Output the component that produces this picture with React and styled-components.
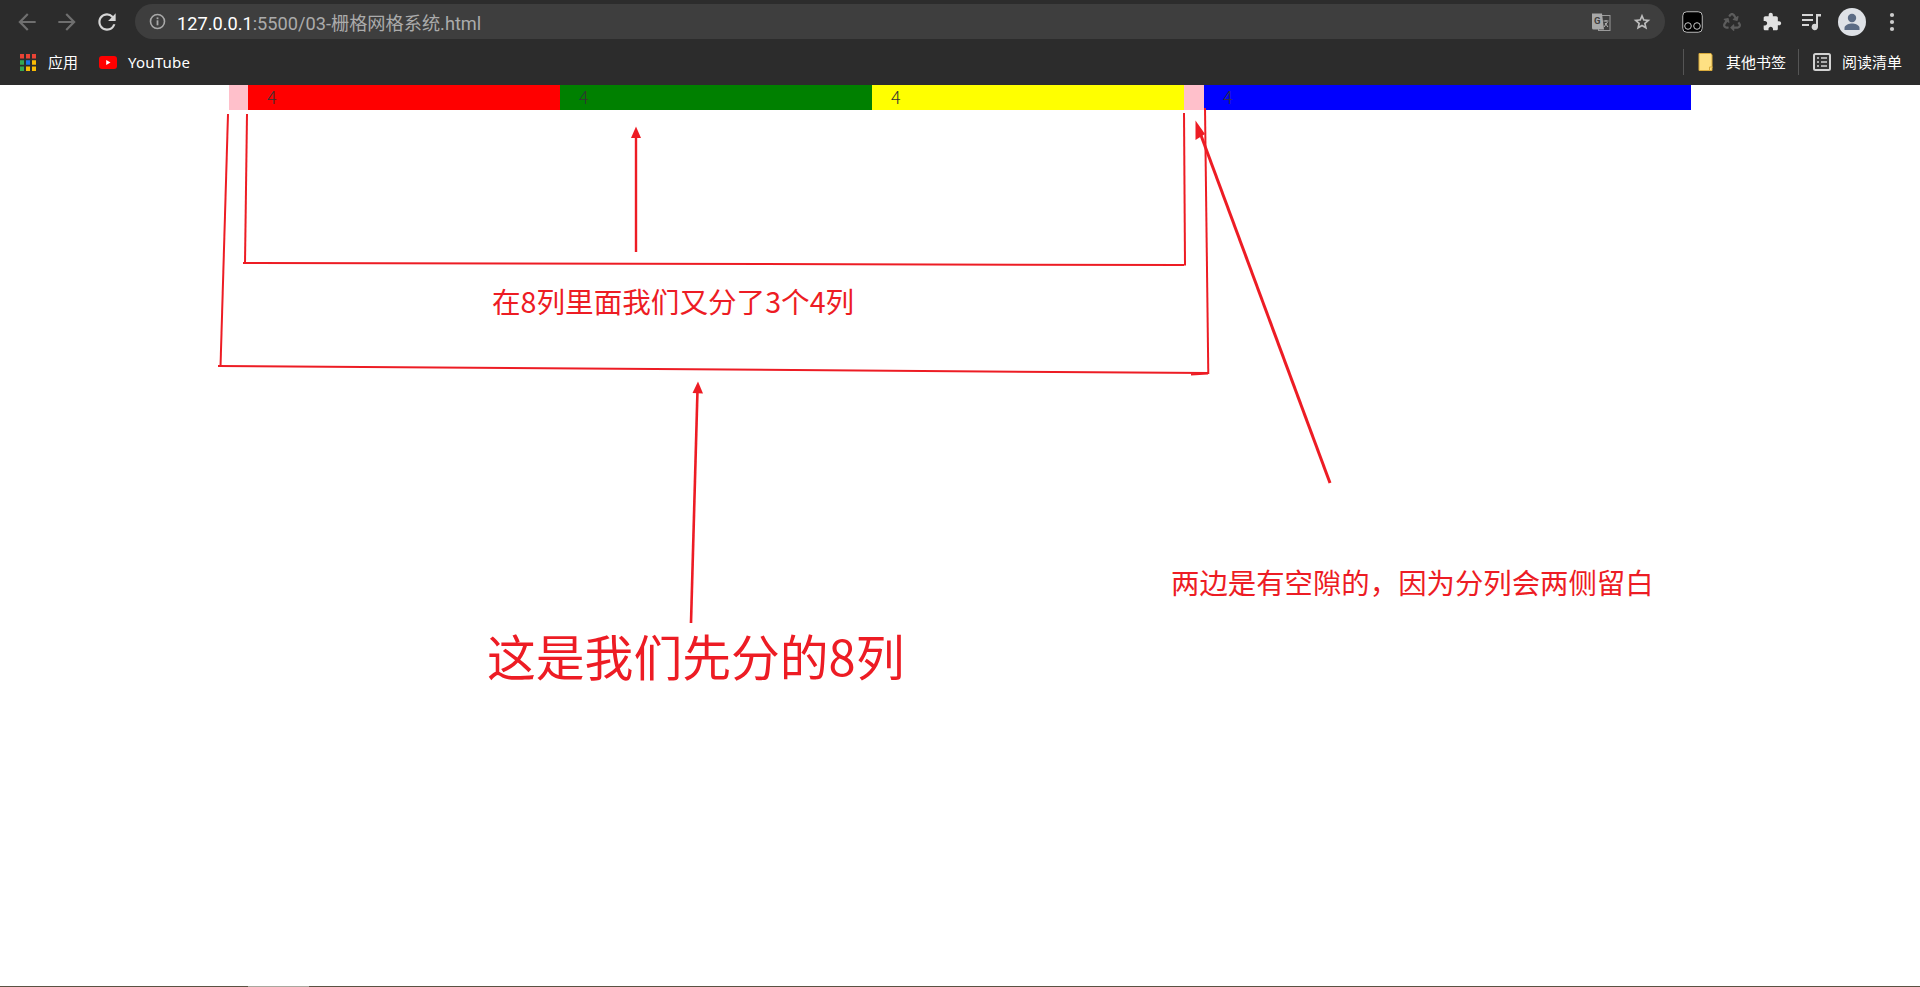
import React from 'react';
import styled, { createGlobalStyle } from 'styled-components';
import { FaRecycle } from 'react-icons/fa';

const Global = createGlobalStyle`
  html, body { margin: 0; padding: 0; background: #fff; overflow: hidden; }
  body { font-family: "Noto Sans CJK SC", "Noto Sans", sans-serif; }
`;
const Page = styled.div`
  position: relative; width: 1920px; height: 987px; display: flex; flex-direction: column; background: #fff; overflow: hidden;
`;
const BrowserChrome = styled.header`
  flex: none; height: 85px; background: #2c2c2c; display: flex; flex-direction: column;
`;
const Toolbar = styled.div`
  height: 46px; display: flex; align-items: flex-start; padding: 4px 0 0 14px; box-sizing: border-box;
`;
const NavButton = styled.div`
  width: 26px; height: 35px; margin-right: ${p => p.$gap}px; display: flex; align-items: center; justify-content: center; flex: none;
  svg { width: 26px; height: 26px; fill: ${p => p.$color}; }
`;
const Omnibox = styled.div`
  flex: none; width: 1530px; height: 35px; margin: 0 7px 0 15px; border-radius: 18px; background: #3e3e3e;
  display: flex; align-items: center; padding: 0 13px 0 14px; box-sizing: border-box;
`;
const InfoIcon = styled.svg`width: 17px; height: 17px; flex: none; margin-right: 11px;`;
const Url = styled.div`
  flex: 1; font-family: Roboto, "Noto Sans CJK SC", sans-serif; font-size: 18.2px; color: #ababab; white-space: nowrap;
  b { font-weight: 400; color: #fff; }
`;
const OmniIcons = styled.div`display: flex; align-items: center; gap: 21px;`;
const ToolIcons = styled.div`display: flex; align-items: center; height: 35px;`;
const ToolIcon = styled.div`
  width: 40px; height: 35px; display: flex; align-items: center; justify-content: center; flex: none;
`;
const Avatar = styled.div`
  width: 28px; height: 28px; margin: 0 6px; border-radius: 50%; background: #dee1e6; display: flex; align-items: center; justify-content: center; flex: none;
`;
const BookmarkBar = styled.div`
  height: 39px; display: flex; align-items: center; padding: 0 18px 7px 20px; box-sizing: border-box; color: #fff;
`;
const Bookmark = styled.div`
  display: flex; align-items: center; gap: ${p => p.$gap}px; margin-right: ${p => p.$after || 0}px; font-size: 15px; line-height: 20px; white-space: nowrap;
`;
const LatinLabel = styled.span`font-family: "Noto Sans", sans-serif; font-size: 15px; letter-spacing: 0.2px;`;
const Spacer = styled.div`flex: 1;`;
const Divider = styled.div`width: 1px; height: 26px; background: #555; margin: 0 ${p => p.$right}px 0 0; flex: none;`;

const Main = styled.main`flex: 1; padding-left: 229px;`;
const Row = styled.div`display: flex; width: 1462px; height: 25px;`;
const Column = styled.div`
  box-sizing: border-box; flex: none; width: ${p => p.$width}; padding: 0 18px 0 19px; background: ${p => p.$bg};
  font-family: "Noto Sans CJK SC", sans-serif; font-weight: 300; font-size: 18px; line-height: 23px; color: #333;
`;
const NestedRow = styled.div`display: flex; margin: 0 -18px 0 0; padding: 0 0 0 0; height: 25px;`;
const InnerColumn = styled(Column)`width: 312px;`;

const Edge = styled.div`flex: none; height: 1px; display: flex; background: #5a5242;`;
const EdgeTab = styled.div`width: 61px; margin-left: 248px; background: #aaa89e;`;

const Overlay = styled.svg`position: absolute; left: 0; top: 0; width: 1920px; height: 987px; pointer-events: none;`;
const Note = styled.div`
  position: absolute; left: ${p => p.$x}px; top: ${p => p.$y}px; font-size: ${p => p.$size}px; line-height: 1; color: #ed1c24; white-space: nowrap;
`;

const P = {
  back: 'M20 11H7.83l5.59-5.59L12 4l-8 8 8 8 1.41-1.41L7.83 13H20v-2z',
  fwd: 'M12 4l-1.41 1.41L16.17 11H4v2h12.17l-5.58 5.59L12 20l8-8z',
  reload: 'M17.65 6.35A7.958 7.958 0 0012 4c-4.42 0-7.99 3.58-7.99 8s3.57 8 7.99 8c3.73 0 6.84-2.55 7.73-6h-2.08A5.99 5.99 0 0112 18c-3.31 0-6-2.69-6-6s2.69-6 6-6c1.66 0 3.14.69 4.22 1.78L13 11h7V4l-2.35 2.35z',
  star: 'M12 7.13l.97 2.29.47 1.11 1.2.1 2.47.21-1.88 1.63-.91.79.27 1.18.56 2.41-2.12-1.28-1.03-.62-1.03.62-2.12 1.28.56-2.41.27-1.18-.91-.79-1.88-1.63 2.47-.21 1.2-.1.47-1.11.97-2.29M12 2L9.19 8.63 2 9.24l5.46 4.73L5.82 21 12 17.27 18.18 21l-1.64-7.03L22 9.24l-7.19-.61L12 2z',
  ext: 'M20.5 11H19V7c0-1.1-.9-2-2-2h-4V3.5C13 2.12 11.88 1 10.5 1S8 2.12 8 3.5V5H4c-1.1 0-1.99.9-1.99 2v3.8H3.5c1.49 0 2.7 1.21 2.7 2.7s-1.21 2.7-2.7 2.7H2V20c0 1.1.9 2 2 2h3.8v-1.5c0-1.49 1.21-2.7 2.7-2.7 1.49 0 2.7 1.21 2.7 2.7V22H17c1.1 0 2-.9 2-2v-4h1.5c1.38 0 2.5-1.12 2.5-2.5S21.88 11 20.5 11z',
};

const Translate = () => (
  <svg width="20" height="20" viewBox="0 0 20 20">
    <rect x="7.5" y="3.5" width="11.5" height="15" fill="#3e3e3e" stroke="#9a9a9a" />
    <path d="M1 1.5h10l2 16H2.5q-1.5 0-1.5-1.5z" fill="#a8a8a8" />
    <text x="3" y="12" fontFamily="Roboto, sans-serif" fontWeight="700" fontSize="9.5" fill="#3e3e3e">G</text>
    <path d="M12.5 9h5M15 8v1.5M13 15l3.5-5M14 11l3 4" stroke="#b5b5b5" strokeWidth="1" fill="none" />
  </svg>
);
const Goggles = () => (
  <svg width="21" height="22" viewBox="0 0 21 22">
    <rect x="0.75" y="0.75" width="19.5" height="20.5" rx="4" fill="#000" stroke="#b8b8b8" strokeWidth="1" />
    <circle cx="6" cy="15" r="3.3" fill="none" stroke="#c8c8c8" strokeWidth="1" />
    <circle cx="15" cy="15" r="3.3" fill="none" stroke="#c8c8c8" strokeWidth="1" />
  </svg>
);
const Media = () => (
  <svg width="20" height="18" viewBox="0 0 20 18" fill="#d5d5d5">
    <rect x="0" y="1" width="11" height="2" />
    <rect x="0" y="6" width="11" height="2" />
    <rect x="0" y="11" width="7" height="2" />
    <path d="M14 1h5v2.5h-3V14a3.2 3.2 0 1 1-2-3z" />
  </svg>
);
const Dots = () => (
  <svg width="6" height="20" viewBox="0 0 6 20" fill="#ccc">
    <circle cx="3" cy="3" r="2.1" /><circle cx="3" cy="10" r="2.1" /><circle cx="3" cy="17" r="2.1" />
  </svg>
);
const Person = () => (
  <svg width="22" height="22" viewBox="0 0 22 22" fill="#5b6b84">
    <circle cx="11" cy="7" r="4.2" />
    <path d="M3.5 19v-2c0-3 5-4.4 7.5-4.4s7.5 1.4 7.5 4.4v2z" />
  </svg>
);
const APPS = ['#ea4335', '#ea4335', '#ea4335', '#34a853', '#1a73e8', '#fbbc04', '#34a853', '#fbbc04', '#fbbc04'];
const Apps = () => (
  <svg width="16" height="17" viewBox="0 0 16 17">
    {APPS.map((c, i) => (
      <rect key={i} x={(i % 3) * 6} y={Math.floor(i / 3) * 6.25} width="4" height="4.5" fill={c} />
    ))}
  </svg>
);
const YouTubeLogo = () => (
  <svg width="18" height="13" viewBox="0 0 18 13">
    <rect width="18" height="13" rx="3" fill="#f00" />
    <path d="M7.2 4l4.3 2.5L7.2 9z" fill="#fff" />
  </svg>
);
const Folder = () => (
  <svg width="15" height="18" viewBox="0 0 15 18">
    <path d="M1 .5h12l1 1.5v15.5H1z" fill="#fee083" stroke="#d9ab3c" />
    <path d="M11.5 17.5v-3.5h3" fill="#fee083" stroke="#d9ab3c" />
  </svg>
);
const ReadingList = () => (
  <svg width="18" height="18" viewBox="0 0 18 18">
    <rect x="1" y="1" width="16" height="16" rx="1.5" fill="#333" stroke="#d2d2d2" strokeWidth="2" />
    <path d="M4 5h2M4 9h2M4 13h2M8 5h6M8 9h6M8 13h6" stroke="#d2d2d2" strokeWidth="1.6" />
  </svg>
);

const RED = '#ed1c24';
const Stroke = ({ d, w = 2 }) => <path d={d} fill="none" stroke={RED} strokeWidth={w} />;
const Head = ({ points }) => <polygon points={points} fill={RED} />;

export default function App() {
  return (
    <Page>
      <Global />
      <BrowserChrome>
        <Toolbar>
          <NavButton $gap={14} $color="#6f6f6f"><svg viewBox="0 0 24 24"><path d={P.back} /></svg></NavButton>
          <NavButton $gap={14} $color="#6f6f6f"><svg viewBox="0 0 24 24"><path d={P.fwd} /></svg></NavButton>
          <NavButton $gap={0} $color="#d6d6d6"><svg viewBox="0 0 24 24"><path d={P.reload} /></svg></NavButton>
          <Omnibox>
            <InfoIcon viewBox="0 0 17 17">
              <circle cx="8.5" cy="8.5" r="7" fill="none" stroke="#a8a8a8" strokeWidth="1.6" />
              <rect x="7.6" y="7.3" width="1.8" height="5" fill="#a8a8a8" />
              <rect x="7.6" y="4.4" width="1.8" height="1.8" fill="#a8a8a8" />
            </InfoIcon>
            <Url><b>127.0.0.1</b>:5500/03-栅格网格系统.html</Url>
            <OmniIcons>
              <Translate />
              <svg width="20" height="20" viewBox="0 0 24 24" fill="#bdbdbd"><path d={P.star} /></svg>
            </OmniIcons>
          </Omnibox>
          <ToolIcons>
            <ToolIcon><Goggles /></ToolIcon>
            <ToolIcon><FaRecycle size={18} color="#5c5c5c" /></ToolIcon>
            <ToolIcon><svg width="20" height="20" viewBox="0 0 24 24" fill="#e0e0e0"><path d={P.ext} /></svg></ToolIcon>
            <ToolIcon><Media /></ToolIcon>
            <Avatar><Person /></Avatar>
            <ToolIcon><Dots /></ToolIcon>
          </ToolIcons>
        </Toolbar>
        <BookmarkBar>
          <Bookmark $gap={12} $after={21}><Apps />应用</Bookmark>
          <Bookmark $gap={11}><YouTubeLogo /><LatinLabel>YouTube</LatinLabel></Bookmark>
          <Spacer />
          <Divider $right={14} />
          <Bookmark $gap={13} $after={12}><Folder />其他书签</Bookmark>
          <Divider $right={14} />
          <Bookmark $gap={11}><ReadingList />阅读清单</Bookmark>
        </BookmarkBar>
      </BrowserChrome>
      <Main>
        <Row>
          <Column $width="975px" $bg="pink">
            <NestedRow>
              <InnerColumn $bg="red">4</InnerColumn>
              <InnerColumn $bg="green">4</InnerColumn>
              <InnerColumn $bg="yellow">4</InnerColumn>
            </NestedRow>
          </Column>
          <Column $width="487px" $bg="blue">4</Column>
        </Row>
      </Main>
      <Edge><EdgeTab /></Edge>
      <Overlay viewBox="0 0 1920 987">
        <Stroke d="M228 114L220.5 367" />
        <Stroke d="M218 366L1208 373" />
        <Stroke d="M1205 108L1208.3 374" />
        <Stroke d="M1191 374.5L1208 373.5" />
        <Stroke d="M247 114L245 263" />
        <Stroke d="M243 263L1184 265" />
        <Stroke d="M1184 113L1185 265.5" />
        <Stroke d="M636 252V134" w={2.4} />
        <Head points="636,126.5 631,138 641,138" />
        <Stroke d="M691 623L697.5 390" w={2.6} />
        <Head points="698,381.5 692.5,393 703,393.5" />
        <Stroke d="M1330 483L1199 130" w={3} />
        <Head points="1195.5,120.5 1195.5,140 1205,134" />
      </Overlay>
      <Note $x={492} $y={287} $size={28.6}>在8列里面我们又分了3个4列</Note>
      <Note $x={1171} $y={568} $size={28.4}>两边是有空隙的，因为分列会两侧留白</Note>
      <Note $x={487} $y={631} $size={48.8}>这是我们先分的8列</Note>
    </Page>
  );
}
